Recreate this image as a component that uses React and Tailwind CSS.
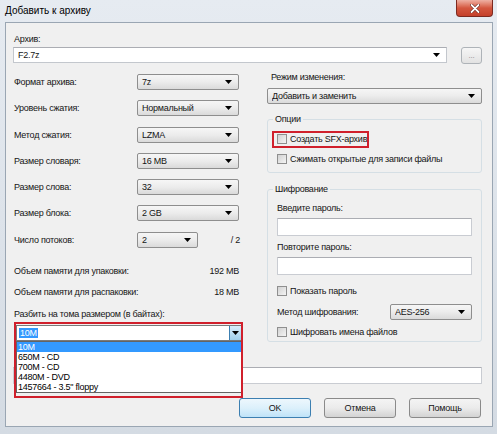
import React from 'react';

// Окно 7-Zip "Добавить к архиву" в стиле Windows 7

function Arrow() {
  return (
    <svg width="7" height="4" viewBox="0 0 7 4" className="shrink-0">
      <path d="M0 0h7L3.5 4z" fill="#000" />
    </svg>
  );
}

function Select({ value, className = '' }) {
  return (
    <div className={`flex items-center h-[16px] pl-[4px] pr-[6px] border border-[#8e8e8e] rounded-[2px] bg-gradient-to-b from-[#f6f6f6] via-[#ececec] to-[#dadada] ${className}`}>
      <span className="flex-1 truncate">{value}</span>
      <Arrow />
    </div>
  );
}

function Check({ label }) {
  return (
    <div className="flex items-center gap-[3px] h-[12px]">
      <span className="w-[10px] h-[10px] border border-[#8f8f8f] bg-gradient-to-br from-[#d2d2d2] to-[#f4f4f4]" />
      <span>{label}</span>
    </div>
  );
}

function Input({ className = '' }) {
  return <div className={`bg-white border border-[#c9ccd2] border-t-[#abadb3] rounded-[1px] ${className}`} />;
}

function Button({ children, focused = false }) {
  return (
    <button
      className={`w-[72px] h-[20px] flex items-center justify-center rounded-[3px] border ${
        focused
          ? 'border-[#3c7fb1] bg-gradient-to-b from-[#edf7fd] via-[#dcf0fb] to-[#bfe3f8]'
          : 'border-[#8a8a8a] bg-gradient-to-b from-[#f4f4f4] via-[#ebebeb] to-[#d3d3d3]'
      }`}
    >
      {children}
    </button>
  );
}

const leftRows = [
  ['Формат архива:', '7z'],
  ['Уровень сжатия:', 'Нормальный'],
  ['Метод сжатия:', 'LZMA'],
  ['Размер словаря:', '16 MB'],
  ['Размер слова:', '32'],
  ['Размер блока:', '2 GB'],
];

const volumes = ['10M', '650M - CD', '700M - CD', '4480M - DVD', '1457664 - 3.5" floppy'];

export default function App() {
  return (
    <div className="relative w-[497px] h-[434px] overflow-hidden bg-gradient-to-b from-[#e6ebf1] via-[#dde3ea] to-[#d4dbe3] font-['Liberation_Sans',Arial,sans-serif] text-[9px] leading-[10px] tracking-[-0.25px] text-[#151515]">
      {/* заголовок */}
      <div className="h-[22px] flex items-center pl-[5px] text-[10px] tracking-normal text-black">Добавить к архиву</div>
      <div className="absolute top-0 left-[456px] w-[37px] h-[17px] rounded-b-[4px] border border-t-0 border-[#7d2a20] bg-gradient-to-b from-[#eeb0a3] via-[#d4573f] to-[#c4402b] flex items-center justify-center">
        <svg width="10" height="9" viewBox="0 0 10 9">
          <path d="M1.5 1l7 7M8.5 1l-7 7" stroke="#5a1a12" strokeWidth="3" strokeLinecap="round" />
          <path d="M1.5 1l7 7M8.5 1l-7 7" stroke="#fff" strokeWidth="1.8" strokeLinecap="round" />
        </svg>
      </div>

      {/* клиентская область */}
      <div className="ml-[5px] w-[488px] h-[405px] border border-[#9aa6b3] bg-[#f0f0f0] pl-[7px] pr-[10px] pt-[11px] flex flex-col">
        <div className="pl-[1px] h-[10px]">Архив:</div>
        <div className="mt-[3px] flex items-start gap-[14px]">
          <div className="flex-1 h-[16px] bg-white border border-[#c3c7cd] border-t-[#abadb3] flex items-center pl-[4px] pr-[6px]">
            <span className="flex-1">F2.7z</span>
            <Arrow />
          </div>
          <button className="w-[21px] h-[17px] rounded-[3px] border border-[#aeb3b8] bg-gradient-to-b from-[#f6f6f6] to-[#e2e2e2] text-[#8a8a8a] text-[8px] leading-[8px] flex items-center justify-center">
            ...
          </button>
        </div>

        <div className="mt-[8px] grid grid-cols-[230px_215px] gap-x-[24px]">
          {/* левая колонка */}
          <div className="pl-[1px] pt-[2px] flex flex-col">
            <div className="flex flex-col gap-[10.3px]">
              {leftRows.map(([label, value]) => (
                <div key={label} className="flex items-center h-[16px]">
                  <span className="w-[123px]">{label}</span>
                  <Select value={value} className="w-[102px]" />
                </div>
              ))}
              <div className="flex items-center h-[16px]">
                <span className="w-[123px]">Число потоков:</span>
                <Select value="2" className="w-[61px]" />
                <span className="flex-1 text-right pr-[3px]">/ 2</span>
              </div>
            </div>
            <div className="mt-[17px] h-[12px] flex items-center justify-between pr-[4px]">
              <span>Объем памяти для упаковки:</span>
              <span>192 MB</span>
            </div>
            <div className="mt-[9px] h-[12px] flex items-center justify-between pr-[4px]">
              <span>Объем памяти для распаковки:</span>
              <span>18 MB</span>
            </div>
            <div className="mt-[10px] h-[12px] flex items-center">Разбить на тома размером (в байтах):</div>
            <div className="mt-[5px] relative w-[226px] ml-[2px]">
              <div className="h-[16px] bg-white border border-[#7a7a7a] flex items-center pl-[2px]">
                <span className="flex-1">
                  <span className="bg-[#3399ff] text-white px-[1px]">10M</span>
                </span>
                <div className="w-[12px] h-full flex items-center justify-center border-l border-[#3c7fb1] bg-gradient-to-b from-[#d9eefb] to-[#9fcfec]">
                  <Arrow />
                </div>
              </div>
              {/* раскрытый список */}
              <div className="absolute z-10 left-0 right-0 top-full h-[52px] bg-white border border-[#646464] text-black">
                {volumes.map((v, i) => (
                  <div key={v} className={`h-[10px] leading-[10px] pl-[1px] ${i === 0 ? 'bg-[#3399ff] text-white' : ''}`}>
                    {v}
                  </div>
                ))}
              </div>
              <div className="absolute z-20 -left-[2px] -top-[3px] w-[229px] h-[76px] border-2 border-[#d0202c] pointer-events-none" />
            </div>
          </div>

          {/* правая колонка */}
          <div className="flex flex-col">
            <div className="h-[10px] pl-[4px]">Режим изменения:</div>
            <Select value="Добавить и заменить" className="mt-[6px]" />

            <fieldset className="mt-[10px] h-[59px] border border-[#d5dfe5] rounded-[3px] pl-[9px] pr-[9px]">
              <legend className="-ml-[4px] px-[2px] leading-[10px]">Опции</legend>
              <div className="mt-[9px] relative w-fit">
                <Check label="Создать SFX-архив" />
                <div className="absolute -left-[5px] -top-[2px] w-[97px] h-[17px] border-2 border-[#d0202c]" />
              </div>
              <div className="mt-[8px]">
                <Check label="Сжимать открытые для записи файлы" />
              </div>
            </fieldset>

            <fieldset className="mt-[11px] h-[158px] border border-[#d5dfe5] rounded-[3px] pl-[9px] pr-[9px]">
              <legend className="-ml-[4px] px-[2px] leading-[10px]">Шифрование</legend>
              <div className="mt-[9px] h-[10px]">Введите пароль:</div>
              <Input className="mt-[5px] h-[18px]" />
              <div className="mt-[6px] h-[10px]">Повторите пароль:</div>
              <Input className="mt-[5px] h-[18px]" />
              <div className="mt-[10px]">
                <Check label="Показать пароль" />
              </div>
              <div className="mt-[7px] flex items-center justify-between">
                <span>Метод шифрования:</span>
                <Select value="AES-256" className="w-[82px]" />
              </div>
              <div className="mt-[6px]">
                <Check label="Шифровать имена файлов" />
              </div>
            </fieldset>
          </div>
        </div>

        {/* подпись "Параметры" скрыта под раскрытым списком */}
        <div className="mt-[9px] h-[10px]" />
        <Input className="mt-[6px] h-[17px]" />

        <div className="mt-[14px] flex justify-end gap-[13px] pr-[1px]">
          <Button focused>OK</Button>
          <Button>Отмена</Button>
          <Button>Помощь</Button>
        </div>
      </div>
    </div>
  );
}
